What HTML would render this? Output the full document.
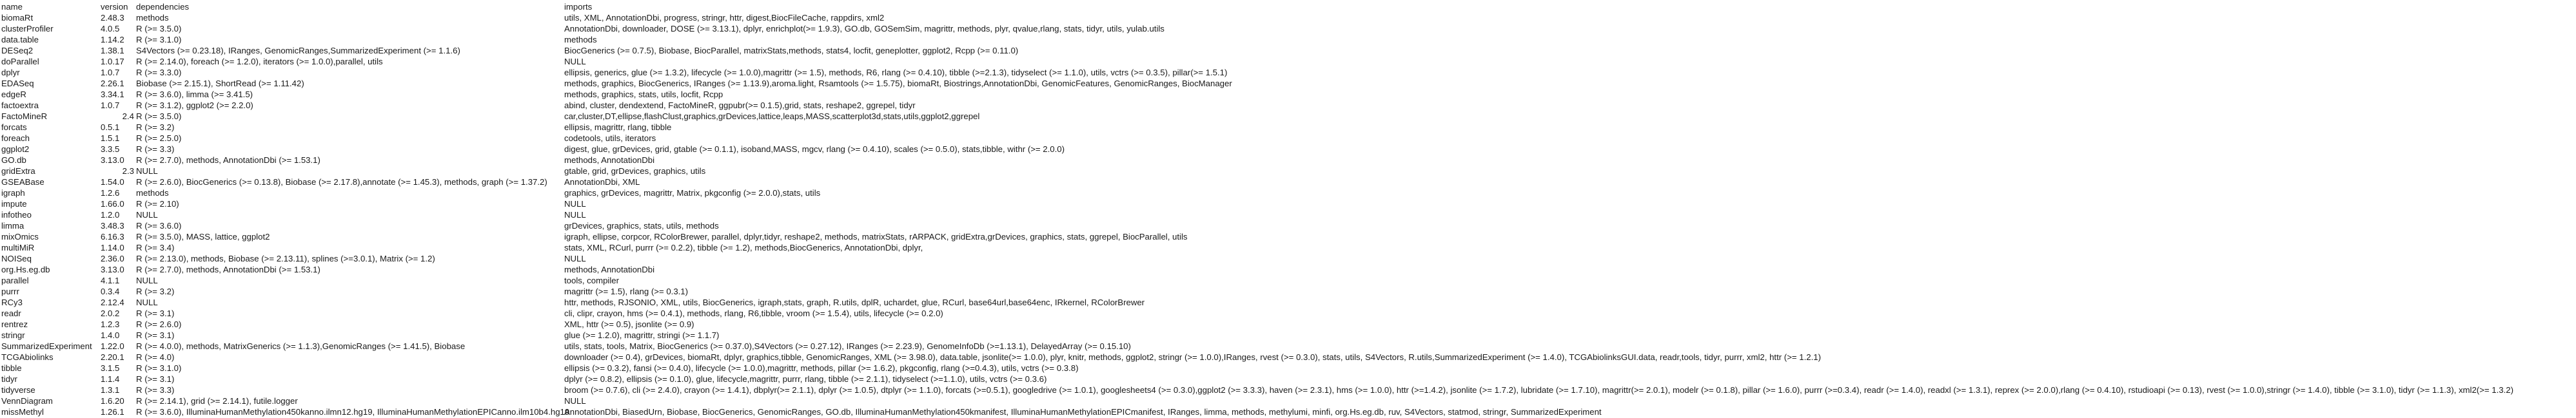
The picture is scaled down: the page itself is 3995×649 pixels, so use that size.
<!DOCTYPE html>
<html><head><meta charset="utf-8">
<style>
html,body{margin:0;padding:0;background:#fff;}
body{width:3995px;height:649px;position:relative;overflow:hidden;font-family:"Liberation Sans",Arial,sans-serif;font-size:13.2px;color:#1a1a1a;}
.r{position:absolute;left:0;height:17px;line-height:17px;white-space:nowrap;width:3995px;}
.r span{position:absolute;top:0;white-space:nowrap;}
.n{left:2px;}
.v{left:156px;}
.vr{right:calc(3995px - 208px);}
.d{left:211px;}
.i{left:875px;}
</style></head><body>
<div id="t"></div>
<script>
var rows=[
["name","version","dependencies","imports"],
["biomaRt","2.48.3","methods","utils, XML, AnnotationDbi, progress, stringr, httr, digest,BiocFileCache, rappdirs, xml2"],
["clusterProfiler","4.0.5","R (>= 3.5.0)","AnnotationDbi, downloader, DOSE (>= 3.13.1), dplyr, enrichplot(>= 1.9.3), GO.db, GOSemSim, magrittr, methods, plyr, qvalue,rlang, stats, tidyr, utils, yulab.utils"],
["data.table","1.14.2","R (>= 3.1.0)","methods"],
["DESeq2","1.38.1","S4Vectors (>= 0.23.18), IRanges, GenomicRanges,SummarizedExperiment (>= 1.1.6)","BiocGenerics (>= 0.7.5), Biobase, BiocParallel, matrixStats,methods, stats4, locfit, geneplotter, ggplot2, Rcpp (>= 0.11.0)"],
["doParallel","1.0.17","R (>= 2.14.0), foreach (>= 1.2.0), iterators (>= 1.0.0),parallel, utils","NULL"],
["dplyr","1.0.7","R (>= 3.3.0)","ellipsis, generics, glue (>= 1.3.2), lifecycle (>= 1.0.0),magrittr (>= 1.5), methods, R6, rlang (>= 0.4.10), tibble (>=2.1.3), tidyselect (>= 1.1.0), utils, vctrs (>= 0.3.5), pillar(>= 1.5.1)"],
["EDASeq","2.26.1","Biobase (>= 2.15.1), ShortRead (>= 1.11.42)","methods, graphics, BiocGenerics, IRanges (>= 1.13.9),aroma.light, Rsamtools (>= 1.5.75), biomaRt, Biostrings,AnnotationDbi, GenomicFeatures, GenomicRanges, BiocManager"],
["edgeR","3.34.1","R (>= 3.6.0), limma (>= 3.41.5)","methods, graphics, stats, utils, locfit, Rcpp"],
["factoextra","1.0.7","R (>= 3.1.2), ggplot2 (>= 2.2.0)","abind, cluster, dendextend, FactoMineR, ggpubr(>= 0.1.5),grid, stats, reshape2, ggrepel, tidyr"],
["FactoMineR","#2.4","R (>= 3.5.0)","car,cluster,DT,ellipse,flashClust,graphics,grDevices,lattice,leaps,MASS,scatterplot3d,stats,utils,ggplot2,ggrepel"],
["forcats","0.5.1","R (>= 3.2)","ellipsis, magrittr, rlang, tibble"],
["foreach","1.5.1","R (>= 2.5.0)","codetools, utils, iterators"],
["ggplot2","3.3.5","R (>= 3.3)","digest, glue, grDevices, grid, gtable (>= 0.1.1), isoband,MASS, mgcv, rlang (>= 0.4.10), scales (>= 0.5.0), stats,tibble, withr (>= 2.0.0)"],
["GO.db","3.13.0","R (>= 2.7.0), methods, AnnotationDbi (>= 1.53.1)","methods, AnnotationDbi"],
["gridExtra","#2.3","NULL","gtable, grid, grDevices, graphics, utils"],
["GSEABase","1.54.0","R (>= 2.6.0), BiocGenerics (>= 0.13.8), Biobase (>= 2.17.8),annotate (>= 1.45.3), methods, graph (>= 1.37.2)","AnnotationDbi, XML"],
["igraph","1.2.6","methods","graphics, grDevices, magrittr, Matrix, pkgconfig (>= 2.0.0),stats, utils"],
["impute","1.66.0","R (>= 2.10)","NULL"],
["infotheo","1.2.0","NULL","NULL"],
["limma","3.48.3","R (>= 3.6.0)","grDevices, graphics, stats, utils, methods"],
["mixOmics","6.16.3","R (>= 3.5.0), MASS, lattice, ggplot2","igraph, ellipse, corpcor, RColorBrewer, parallel, dplyr,tidyr, reshape2, methods, matrixStats, rARPACK, gridExtra,grDevices, graphics, stats, ggrepel, BiocParallel, utils"],
["multiMiR","1.14.0","R (>= 3.4)","stats, XML, RCurl, purrr (>= 0.2.2), tibble (>= 1.2), methods,BiocGenerics, AnnotationDbi, dplyr,"],
["NOISeq","2.36.0","R (>= 2.13.0), methods, Biobase (>= 2.13.11), splines (>=3.0.1), Matrix (>= 1.2)","NULL"],
["org.Hs.eg.db","3.13.0","R (>= 2.7.0), methods, AnnotationDbi (>= 1.53.1)","methods, AnnotationDbi"],
["parallel","4.1.1","NULL","tools, compiler"],
["purrr","0.3.4","R (>= 3.2)","magrittr (>= 1.5), rlang (>= 0.3.1)"],
["RCy3","2.12.4","NULL","httr, methods, RJSONIO, XML, utils, BiocGenerics, igraph,stats, graph, R.utils, dplR, uchardet, glue, RCurl, base64url,base64enc, IRkernel, RColorBrewer"],
["readr","2.0.2","R (>= 3.1)","cli, clipr, crayon, hms (>= 0.4.1), methods, rlang, R6,tibble, vroom (>= 1.5.4), utils, lifecycle (>= 0.2.0)"],
["rentrez","1.2.3","R (>= 2.6.0)","XML, httr (>= 0.5), jsonlite (>= 0.9)"],
["stringr","1.4.0","R (>= 3.1)","glue (>= 1.2.0), magrittr, stringi (>= 1.1.7)"],
["SummarizedExperiment","1.22.0","R (>= 4.0.0), methods, MatrixGenerics (>= 1.1.3),GenomicRanges (>= 1.41.5), Biobase","utils, stats, tools, Matrix, BiocGenerics (>= 0.37.0),S4Vectors (>= 0.27.12), IRanges (>= 2.23.9), GenomeInfoDb (>=1.13.1), DelayedArray (>= 0.15.10)"],
["TCGAbiolinks","2.20.1","R (>= 4.0)","downloader (>= 0.4), grDevices, biomaRt, dplyr, graphics,tibble, GenomicRanges, XML (>= 3.98.0), data.table, jsonlite(>= 1.0.0), plyr, knitr, methods, ggplot2, stringr (>= 1.0.0),IRanges, rvest (>= 0.3.0), stats, utils, S4Vectors, R.utils,SummarizedExperiment (>= 1.4.0), TCGAbiolinksGUI.data, readr,tools, tidyr, purrr, xml2, httr (>= 1.2.1)"],
["tibble","3.1.5","R (>= 3.1.0)","ellipsis (>= 0.3.2), fansi (>= 0.4.0), lifecycle (>= 1.0.0),magrittr, methods, pillar (>= 1.6.2), pkgconfig, rlang (>=0.4.3), utils, vctrs (>= 0.3.8)"],
["tidyr","1.1.4","R (>= 3.1)","dplyr (>= 0.8.2), ellipsis (>= 0.1.0), glue, lifecycle,magrittr, purrr, rlang, tibble (>= 2.1.1), tidyselect (>=1.1.0), utils, vctrs (>= 0.3.6)"],
["tidyverse","1.3.1","R (>= 3.3)","broom (>= 0.7.6), cli (>= 2.4.0), crayon (>= 1.4.1), dbplyr(>= 2.1.1), dplyr (>= 1.0.5), dtplyr (>= 1.1.0), forcats (>=0.5.1), googledrive (>= 1.0.1), googlesheets4 (>= 0.3.0),ggplot2 (>= 3.3.3), haven (>= 2.3.1), hms (>= 1.0.0), httr (>=1.4.2), jsonlite (>= 1.7.2), lubridate (>= 1.7.10), magrittr(>= 2.0.1), modelr (>= 0.1.8), pillar (>= 1.6.0), purrr (>=0.3.4), readr (>= 1.4.0), readxl (>= 1.3.1), reprex (>= 2.0.0),rlang (>= 0.4.10), rstudioapi (>= 0.13), rvest (>= 1.0.0),stringr (>= 1.4.0), tibble (>= 3.1.0), tidyr (>= 1.1.3), xml2(>= 1.3.2)"],
["VennDiagram","1.6.20","R (>= 2.14.1), grid (>= 2.14.1), futile.logger","NULL"],
["missMethyl","1.26.1","R (>= 3.6.0), IlluminaHumanMethylation450kanno.ilmn12.hg19, IlluminaHumanMethylationEPICanno.ilm10b4.hg19","AnnotationDbi, BiasedUrn, Biobase, BiocGenerics, GenomicRanges, GO.db, IlluminaHumanMethylation450kmanifest, IlluminaHumanMethylationEPICmanifest, IRanges, limma, methods, methylumi, minfi, org.Hs.eg.db, ruv, S4Vectors, statmod, stringr, SummarizedExperiment"]
];
function esc(s){return s.replace(/&/g,"&amp;").replace(/</g,"&lt;").replace(/>/g,"&gt;");}
var h="";
rows.forEach(function(r,k){
  var top=k*17+1.5;
  var v=r[1], vc="v";
  if(v.charAt(0)=="#"){v=v.slice(1);vc="vr";}
  h+='<div class="r" style="top:'+top+'px"><span class="n">'+esc(r[0])+'</span><span class="'+vc+'">'+esc(v)+'</span><span class="i">'+esc(r[3])+'</span><span class="d">'+esc(r[2])+'</span></div>';
});
document.getElementById("t").innerHTML=h;
</script>
</body></html>
